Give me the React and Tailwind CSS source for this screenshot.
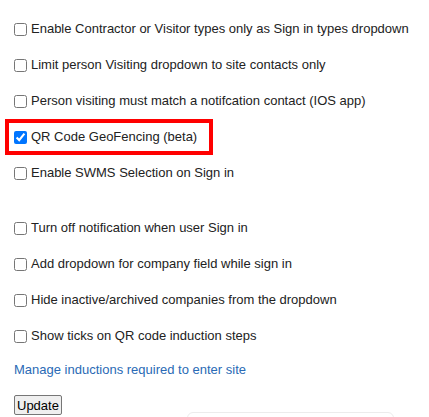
import React from "react";

function Row({ label, checked }) {
  return (
    <div className="flex h-9 items-center pl-[14px]">
      <input type="checkbox" defaultChecked={checked} className="m-0 h-[13px] w-[13px]" />
      <span className="ml-[4px]">{label}</span>
    </div>
  );
}

export default function App() {
  return (
    <div className="relative h-[417px] w-[429px] overflow-hidden bg-white pt-[11px] text-[13px] text-[#222] [font-family:'Liberation_Sans',Arial,sans-serif]">
      <Row label="Enable Contractor or Visitor types only as Sign in types dropdown" />
      <Row label="Limit person Visiting dropdown to site contacts only" />
      <Row label="Person visiting must match a notifcation contact (IOS app)" />
      <div className="ml-[5px] flex h-9 w-[208px] items-center border-4 border-[#ff0000] pl-[5px]">
        <input type="checkbox" defaultChecked className="m-0 h-[13px] w-[13px]" />
        <span className="ml-[4px]">QR Code GeoFencing (beta)</span>
      </div>
      <Row label="Enable SWMS Selection on Sign in" />
      <div className="h-[19px]" />
      <Row label="Turn off notification when user Sign in" />
      <Row label="Add dropdown for company field while sign in" />
      <Row label="Hide inactive/archived companies from the dropdown" />
      <Row label="Show ticks on QR code induction steps" />
      <div className="flex h-8 items-center pl-[14px]">
        <a href="#" className="text-[#2a6ab5]">Manage inductions required to enter site</a>
      </div>
      <div className="pl-[14px] pt-[9px]">
        <button className="h-[20px] rounded-[2px] border border-[#767676] bg-[#efefef] px-[2px] text-[13px] leading-none text-black">
          Update
        </button>
      </div>
      <div className="absolute left-[187px] top-[412px] h-10 w-[207px] rounded-md border border-[#ececec] bg-white" />
    </div>
  );
}
